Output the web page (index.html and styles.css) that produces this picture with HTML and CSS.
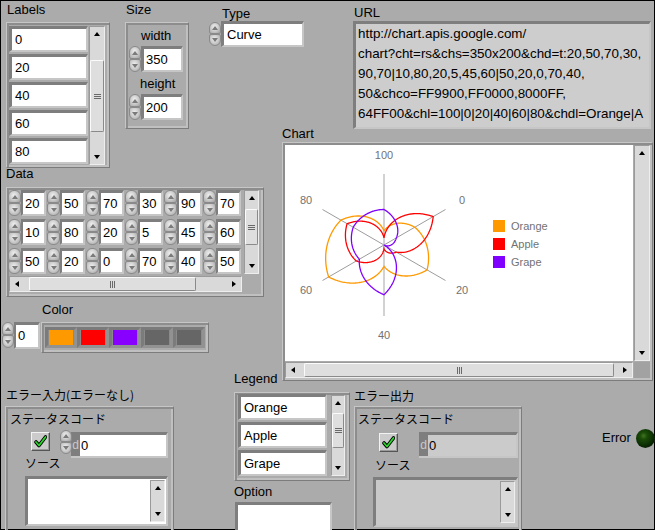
FILE: index.html
```html
<!DOCTYPE html>
<html lang="ja">
<head>
<meta charset="utf-8">
<title>Google Chart Radar</title>
<link rel="stylesheet" href="styles.css">
</head>
<body>
<div class="panel">

  <!-- Labels array -->
  <div class="lbl l-labels">Labels</div>
  <div class="frame arr-labels">
    <div class="stack">
      <div class="box el-lab">0</div>
      <div class="box el-lab">20</div>
      <div class="box el-lab">40</div>
      <div class="box el-lab">60</div>
      <div class="box el-lab">80</div>
    </div>
    <div class="vsb vsb-labels">
      <span class="ar ar-up"></span>
      <div class="trk"><div class="thumb th-labels"><span class="grip-h"></span></div></div>
      <span class="ar ar-dn"></span>
    </div>
  </div>

  <!-- Size cluster -->
  <div class="lbl l-size">Size</div>
  <div class="frame cl-size">
    <div class="lbl-in w-lbl">width</div>
    <div class="num num-size"><div class="spin"><i></i><i></i></div><div class="box nb-size">350</div></div>
    <div class="lbl-in h-lbl">height</div>
    <div class="num num-size"><div class="spin"><i></i><i></i></div><div class="box nb-size">200</div></div>
  </div>

  <!-- Type ring -->
  <div class="lbl l-type">Type</div>
  <div class="num ring-type"><div class="spin spin-type"><i></i><i></i></div><div class="box nb-type">Curve</div></div>

  <!-- URL -->
  <div class="lbl l-url">URL</div>
  <div class="sunk url-box"><div class="url-line">http://chart.apis.google.com/</div><div class="url-line">chart?cht=rs&amp;chs=350x200&amp;chd=t:20,50,70,30,</div><div class="url-line">90,70|10,80,20,5,45,60|50,20,0,70,40,</div><div class="url-line">50&amp;chco=FF9900,FF0000,8000FF,</div><div class="url-line">64FF00&amp;chl=100|0|20|40|60|80&amp;chdl=Orange|A</div><div class="url-line url-last">pple|Grape</div></div>

  <!-- Chart -->
  <div class="lbl l-chart">Chart</div>
  <div class="frame chart">
    <div class="chart-img">
      <svg class="chart-svg" width="348" height="216" viewBox="0 0 348 216">
        <line x1="99" y1="29" x2="99" y2="171" stroke="#d2d2d2" stroke-width="2"/>
        <line x1="37.5" y1="64.5" x2="160.5" y2="135.5" stroke="#9c9c9c" stroke-width="1"/>
        <line x1="37.5" y1="135.5" x2="160.5" y2="64.5" stroke="#9c9c9c" stroke-width="1"/>
        <path data-series="o" fill="none" stroke="#ff9900" stroke-width="1.3"/>
        <path data-series="r" fill="none" stroke="#ff0000" stroke-width="1.3"/>
        <path data-series="p" fill="none" stroke="#8000ff" stroke-width="1.3"/>
        <g class="axis-txt" text-anchor="middle">
          <text x="99" y="14">100</text>
          <text x="177" y="59">0</text>
          <text x="177" y="149">20</text>
          <text x="99" y="194">40</text>
          <text x="21" y="149">60</text>
          <text x="21" y="59">80</text>
        </g>
        <rect x="208" y="75" width="12" height="12" fill="#ff9900"/>
        <rect x="208" y="93" width="12" height="12" fill="#ff0000"/>
        <rect x="208" y="111" width="12" height="12" fill="#8000ff"/>
        <g class="axis-txt">
          <text x="226" y="85">Orange</text>
          <text x="226" y="103">Apple</text>
          <text x="226" y="121">Grape</text>
        </g>
      </svg>
    </div>
    <div class="vsb vsb-chart">
      <span class="ar ar-up"></span>
      <div class="trk"></div>
      <span class="ar ar-dn"></span>
    </div>
    <div class="hsb hsb-chart">
      <span class="ar ar-l"></span>
      <div class="trk"><div class="thumb th-chart"><span class="grip-v"></span></div></div>
      <span class="ar ar-r"></span>
    </div>
    <div class="corner"></div>
  </div>

  <!-- Data array -->
  <div class="lbl l-data">Data</div>
  <div class="frame arr-data">
    <div class="data-top">
      <div class="data-grid">
        <div class="num"><div class="spin"><i></i><i></i></div><div class="box nb-data">20</div></div>
        <div class="num"><div class="spin"><i></i><i></i></div><div class="box nb-data">50</div></div>
        <div class="num"><div class="spin"><i></i><i></i></div><div class="box nb-data">70</div></div>
        <div class="num"><div class="spin"><i></i><i></i></div><div class="box nb-data">30</div></div>
        <div class="num"><div class="spin"><i></i><i></i></div><div class="box nb-data">90</div></div>
        <div class="num"><div class="spin"><i></i><i></i></div><div class="box nb-data">70</div></div>
        <div class="num"><div class="spin"><i></i><i></i></div><div class="box nb-data">10</div></div>
        <div class="num"><div class="spin"><i></i><i></i></div><div class="box nb-data">80</div></div>
        <div class="num"><div class="spin"><i></i><i></i></div><div class="box nb-data">20</div></div>
        <div class="num"><div class="spin"><i></i><i></i></div><div class="box nb-data">5</div></div>
        <div class="num"><div class="spin"><i></i><i></i></div><div class="box nb-data">45</div></div>
        <div class="num"><div class="spin"><i></i><i></i></div><div class="box nb-data">60</div></div>
        <div class="num"><div class="spin"><i></i><i></i></div><div class="box nb-data">50</div></div>
        <div class="num"><div class="spin"><i></i><i></i></div><div class="box nb-data">20</div></div>
        <div class="num"><div class="spin"><i></i><i></i></div><div class="box nb-data">0</div></div>
        <div class="num"><div class="spin"><i></i><i></i></div><div class="box nb-data">70</div></div>
        <div class="num"><div class="spin"><i></i><i></i></div><div class="box nb-data">40</div></div>
        <div class="num"><div class="spin"><i></i><i></i></div><div class="box nb-data">50</div></div>
      </div>
      <div class="vsb vsb-data">
        <span class="ar ar-up"></span>
        <div class="trk"><div class="thumb th-data-v"><span class="grip-h"></span></div></div>
        <span class="ar ar-dn"></span>
      </div>
    </div>
    <div class="hsb hsb-data">
      <span class="ar ar-l"></span>
      <div class="trk"><div class="thumb th-data-h"><span class="grip-v"></span></div></div>
      <span class="ar ar-r"></span>
    </div>
  </div>

  <!-- Color -->
  <div class="lbl l-color">Color</div>
  <div class="num idx-color"><div class="spin"><i></i><i></i></div><div class="box nb-idx">0</div></div>
  <div class="frame arr-color">
    <span class="sw"><i class="sw-o"></i></span>
    <span class="sw"><i class="sw-r"></i></span>
    <span class="sw"><i class="sw-p"></i></span>
    <span class="sw"><i class="sw-g"></i></span>
    <span class="sw"><i class="sw-g"></i></span>
  </div>

  <!-- Error in -->
  <div class="lbl jp l-errin">エラー入力(エラーなし)</div>
  <div class="frame cl-err cl-errin">
    <div class="lbl-in jp">ステータスコード</div>
    <div class="err-row">
      <div class="chk"><svg width="13" height="13" viewBox="0 0 13 13"><path d="M2 7 L5 10.5 L11.5 2" fill="none" stroke="#000" stroke-width="3.6" stroke-linejoin="round" stroke-linecap="round"/><path d="M2 7 L5 10.5 L11.5 2" fill="none" stroke="#2bd62b" stroke-width="1.8" stroke-linejoin="round" stroke-linecap="round"/></svg></div>
      <div class="spin spin-err"><i></i><i></i></div>
      <div class="rnum rnum-in"><span class="radix">d</span><span class="rfield">0</span></div>
    </div>
    <div class="lbl-in jp src-in">ソース</div>
    <div class="sunk src src-inbox">
      <div class="src-txt"></div>
      <div class="vsb vsb-src"><span class="ar ar-up"></span><div class="trk"></div><span class="ar ar-dn"></span></div>
    </div>
  </div>

  <!-- Legend -->
  <div class="lbl l-legend">Legend</div>
  <div class="frame arr-legend">
    <div class="stack">
      <div class="box el-leg">Orange</div>
      <div class="box el-leg">Apple</div>
      <div class="box el-leg">Grape</div>
    </div>
    <div class="vsb vsb-legend">
      <span class="ar ar-up"></span>
      <div class="trk"><div class="thumb th-legend"><span class="grip-h"></span></div></div>
      <span class="ar ar-dn"></span>
    </div>
  </div>

  <!-- Option -->
  <div class="lbl l-option">Option</div>
  <div class="box opt-box"></div>

  <!-- Error out -->
  <div class="lbl jp l-errout">エラー出力</div>
  <div class="frame cl-err cl-errout">
    <div class="lbl-in jp">ステータスコード</div>
    <div class="err-row">
      <div class="chk chk-out"><svg width="13" height="13" viewBox="0 0 13 13"><path d="M2 7 L5 10.5 L11.5 2" fill="none" stroke="#000" stroke-width="3.6" stroke-linejoin="round" stroke-linecap="round"/><path d="M2 7 L5 10.5 L11.5 2" fill="none" stroke="#2bd62b" stroke-width="1.8" stroke-linejoin="round" stroke-linecap="round"/></svg></div>
      <div class="rnum rnum-out"><span class="radix">d</span><span class="rfield ind">0</span></div>
    </div>
    <div class="lbl-in jp src-out">ソース</div>
    <div class="sunk src src-outbox">
      <div class="src-txt"></div>
      <div class="vsb vsb-src"><span class="ar ar-up"></span><div class="trk"></div><span class="ar ar-dn"></span></div>
    </div>
  </div>

  <!-- Error LED -->
  <div class="lbl l-error">Error</div>
  <div class="led"></div>

</div>
<script src="script.js"></script>
</body>
</html>
```

FILE: styles.css
```css
* { box-sizing: border-box; margin: 0; padding: 0; }
html, body { width: 655px; height: 530px; overflow: hidden; }
body {
  background: #ababab;
  font-family: "Liberation Sans", "Noto Sans CJK JP", sans-serif;
  font-size: 13px;
  color: #000;
}
.panel {
  position: relative;
  width: 655px;
  height: 530px;
  background: #ababab;
  overflow: hidden;
  outline: 1px solid #000;
  outline-offset: -1px;
}

/* labels on the free canvas */
.lbl { position: absolute; line-height: 15px; white-space: nowrap; }
.lbl-in { line-height: 15px; white-space: nowrap; }
.jp { font-size: 12px; font-family: "Noto Sans CJK JP", "Liberation Sans", sans-serif; }

.l-labels { left: 7px; top: 2px; }
.l-size { left: 126px; top: 2px; }
.l-type { left: 222px; top: 6px; }
.l-url { left: 354px; top: 5px; }
.l-chart { left: 282px; top: 126px; }
.l-data { left: 6px; top: 166px; }
.l-color { left: 42px; top: 302px; }
.l-errin { left: 6px; top: 387px; }
.l-legend { left: 234px; top: 371px; }
.l-option { left: 234px; top: 484px; }
.l-errout { left: 354px; top: 388px; }
.l-error { left: 602px; top: 430px; }

/* raised frames of arrays and clusters */
.frame {
  position: absolute;
  border: 1px solid;
  border-color: #c6c6c6 #7c7c7c #7c7c7c #c6c6c6;
  box-shadow: inset 2px 2px 0 #8d8d8d, inset -2px -2px 0 #c0c0c0;
}

/* sunken white text boxes */
.box {
  background: #fff;
  border-style: solid;
  border-width: 3px 2px 2px 3px;
  border-color: #7e7e7e #c6c6c6 #c6c6c6 #7e7e7e;
  white-space: nowrap;
  overflow: hidden;
  padding-left: 3px;
  line-height: 21px;
  height: 26px;
}
.sunk {
  border-style: solid;
  border-width: 3px 2px 2px 3px;
  border-color: #7e7e7e #c6c6c6 #c6c6c6 #7e7e7e;
}

/* spinners (increment / decrement) */
.num { display: flex; align-items: flex-start; }
.spin {
  width: 12px;
  height: 26px;
  flex: none;
  display: flex;
  flex-direction: column;
}
.spin i {
  flex: 1;
  position: relative;
  border: 1px solid #8a8a8a;
  background: radial-gradient(ellipse at 45% 40%, #f0f0f0 0, #cfcfcf 45%, #9e9e9e 100%);
}
.spin i:first-child { border-radius: 6px 6px 2px 2px; }
.spin i:last-child { border-radius: 2px 2px 6px 6px; }
.spin i::after {
  content: "";
  position: absolute;
  left: 50%;
  top: 50%;
  margin-left: -3px;
  margin-top: -2px;
  border-left: 3px solid transparent;
  border-right: 3px solid transparent;
}
.spin i:first-child::after { border-bottom: 4px solid #7a7a7a; }
.spin i:last-child::after { border-top: 4px solid #7a7a7a; }
.spin-type { height: 24px; margin-top: 1px; }

/* scrollbars */
.vsb {
  width: 16px;
  display: flex;
  flex-direction: column;
  background: #d9d9d9;
  border: 1px solid;
  border-color: #9a9a9a #eeeeee #eeeeee #9a9a9a;
  flex: none;
}
.hsb {
  height: 16px;
  display: flex;
  background: #d9d9d9;
  border: 1px solid;
  border-color: #9a9a9a #eeeeee #eeeeee #9a9a9a;
  flex: none;
}
.ar { flex: none; display: flex; align-items: center; justify-content: center; }
.vsb .ar { height: 14px; }
.hsb .ar { width: 14px; }
.ar::before { content: ""; display: block; }
.ar-up::before { border-left: 3.5px solid transparent; border-right: 3.5px solid transparent; border-bottom: 4px solid #000; }
.ar-dn::before { border-left: 3.5px solid transparent; border-right: 3.5px solid transparent; border-top: 4px solid #000; }
.ar-l::before { border-top: 3.5px solid transparent; border-bottom: 3.5px solid transparent; border-right: 4px solid #000; }
.ar-r::before { border-top: 3.5px solid transparent; border-bottom: 3.5px solid transparent; border-left: 4px solid #000; }
.trk { flex: 1; min-width: 0; min-height: 0; display: flex; }
.vsb .trk { flex-direction: column; }
.thumb {
  background: #dedede;
  border: 1px solid;
  border-color: #fbfbfb #8a8a8a #8a8a8a #fbfbfb;
  border-radius: 2px;
  display: flex;
  align-items: center;
  justify-content: center;
  flex: none;
}
.grip-h {
  width: 7px; height: 5px;
  border-top: 1px solid #6a6a6a; border-bottom: 1px solid #6a6a6a;
  background: linear-gradient(#6a6a6a, #6a6a6a) center / 100% 1px no-repeat;
}
.grip-v {
  width: 5px; height: 7px;
  border-left: 1px solid #6a6a6a; border-right: 1px solid #6a6a6a;
  background: linear-gradient(#6a6a6a, #6a6a6a) center / 1px 100% no-repeat;
}

/* Labels array */
.arr-labels {
  left: 6px; top: 22px; width: 104px; height: 146px;
  display: flex; gap: 1px;
  padding: 3px 4px 2px 2px;
}
.stack { display: flex; flex-direction: column; gap: 2px; }
.el-lab { width: 79px; }
.vsb-labels { width: 16px; }
.th-labels { margin-top: 19px; height: 72px; }

/* Size cluster */
.cl-size {
  left: 125px; top: 22px; width: 64px; height: 107px;
  display: flex; flex-direction: column; align-items: flex-start;
  padding: 5px 0 0 3px;
}
.w-lbl { margin-left: 12px; }
.h-lbl { margin-left: 11px; margin-top: 4px; }
.num-size { margin-top: 3px; }
.nb-size { width: 42px; padding-left: 2px; }

/* Type ring */
.ring-type { position: absolute; left: 209px; top: 21px; }
.nb-type { width: 83px; }

/* URL */
.url-box {
  position: absolute; left: 353px; top: 21px; width: 298px; height: 108px;
  background: #cdcdcd;
  padding: 0 0 0 2px;
  font-size: 13.4px;
  line-height: 20px;
  overflow: hidden;
}
.url-line { white-space: nowrap; height: 20px; }
.url-last { height: 4px; overflow: hidden; }

/* Chart */
.chart {
  left: 282px; top: 142px; width: 371px; height: 239px;
  display: grid;
  grid-template-columns: 348px 16px;
  grid-template-rows: 216px 16px;
  gap: 1px;
  padding: 2px;
}
.chart-img { background: #fff; overflow: hidden; }
.chart-svg { display: block; }
.axis-txt { font-family: "Liberation Sans", Arial, sans-serif; font-size: 11px; fill: #727272; }
.th-chart { margin-left: 4px; width: 310px; }
.corner { background: #a2a2a2; }

/* Data array */
.arr-data {
  left: 6px; top: 187px; width: 258px; height: 110px;
  display: flex; flex-direction: column;
  padding: 2px 4px 0 1px;
}
.data-top { display: flex; gap: 3px; height: 84px; }
.data-grid {
  display: grid;
  grid-template-columns: repeat(6, 38px);
  grid-auto-rows: 26px;
  column-gap: 1px;
  row-gap: 3px;
}
.data-grid .spin { width: 13px; }
.nb-data { width: 25px; border-width: 3px 2px 2px 2px; padding-left: 2px; }
.vsb-data { width: 15px; }
.th-data-v { margin-top: 4px; height: 36px; }
.hsb-data { margin: 2px 0 0 1px; width: 233px; }
.th-data-h { margin-left: 5px; width: 167px; }

/* Color */
.idx-color { position: absolute; left: 2px; top: 322px; }
.nb-idx { width: 26px; height: 27px; border-width: 3px 2px 2px 2px; line-height: 22px; padding-left: 2px; }
.arr-color {
  left: 41px; top: 322px; width: 168px; height: 31px;
  display: flex;
  padding: 4px 0 0 3px;
}
.sw {
  display: block;
  border: 3px solid;
  border-color: #7b7b7b #929292 #929292 #7b7b7b;
  background: #8a8a8a;
  padding: 0 1px;
  width: 32px; height: 21px;
}
.sw i { display: block; width: 24px; height: 15px; }
.sw-o { background: #ff9900; }
.sw-r { background: #ff0000; }
.sw-p { background: #8800ff; }
.sw-g { background: #666666; }

/* Error clusters */
.cl-err {
  top: 406px; height: 130px;
  display: flex; flex-direction: column; align-items: flex-start;
}
.cl-errin { left: 5px; width: 169px; padding: 4px 0 0 4px; }
.cl-errout { left: 354px; width: 168px; padding: 4px 0 0 3px; }
.err-row { display: flex; align-items: flex-start; margin-top: 4px; }
.chk {
  width: 19px; height: 19px;
  margin: 2px 0 0 21px;
  background: #cbcbcb;
  border: 1px solid;
  border-color: #f2f2f2 #555 #555 #f2f2f2;
  box-shadow: inset -1px -1px 0 #9a9a9a;
  display: flex; align-items: center; justify-content: center;
}
.chk-out { margin-top: 3px; }
.spin-err { height: 24px; margin-left: 10px; }
.rnum {
  display: flex;
  height: 26px;
  border-style: solid;
  border-width: 3px 2px 2px 0;
  border-color: #7e7e7e #c6c6c6 #c6c6c6 #7e7e7e;
  margin-top: 2px;
}
.rnum-in { width: 97px; margin-left: -1px; }
.rnum-out { width: 99px; margin-left: 21px; }
.radix {
  width: 9px; flex: none;
  background: #7e7e7e; color: #c9c9c9;
  font-size: 12px; line-height: 21px; text-align: right; padding-right: 1px;
}
.rfield { flex: 1; background: #fff; line-height: 21px; padding-left: 1px; }
.rfield.ind { background: #cbcbcb; }
.src-in { margin: -3px 0 0 15px; }
.src-out { margin: -1px 0 0 17px; }
.src { display: flex; }
.src-inbox { margin: 6px 0 0 15px; width: 143px; height: 50px; background: #fff; }
.src-outbox { margin: 5px 0 0 15px; width: 145px; height: 50px; background: #c9c9c9; }
.src-txt { flex: 1; }
.vsb-src { width: 15px; margin: 1px 1px 2px 0; }

/* Legend */
.arr-legend {
  left: 234px; top: 392px; width: 116px; height: 89px;
  display: flex; gap: 4px;
  padding: 1px 4px 4px 3px;
}
.el-leg { width: 89px; }
.vsb-legend { width: 14px; margin-top: 1px; }
.th-legend { margin-top: 3px; height: 35px; }

/* Option */
.opt-box { position: absolute; left: 235px; top: 502px; width: 97px; height: 32px; }

/* LED */
.led {
  position: absolute; left: 636px; top: 429px;
  width: 19px; height: 19px; border-radius: 50%;
  background: radial-gradient(circle at 40% 36%, #3f7420 0, #1a4a07 22%, #0d3204 52%, #072002 70%, #6e6e6e 80%, #d6d6d6 92%, #bdbdbd 100%);
}
```

FILE: script.js
```js
(function () {
  var data = {
    o: [20, 50, 70, 30, 90, 70],
    r: [10, 80, 20, 5, 45, 60],
    p: [50, 20, 0, 70, 40, 50]
  };
  var cx = 99, cy = 100, R = 71;
  function build(v) {
    var d = '';
    for (var s = 0; s <= 360; s++) {
      var k = Math.floor(s / 60) % 6;
      var f = (s % 60) / 60;
      var a = v[k], b = v[(k + 1) % 6];
      if (s === 360) { a = v[0]; b = v[0]; f = 0; }
      var r = (a + (b - a) * f) / 100 * R;
      var t = s * Math.PI / 180;
      var x = cx + r * Math.sin(t);
      var y = cy - r * Math.cos(t);
      d += (s ? 'L' : 'M') + x.toFixed(2) + ' ' + y.toFixed(2);
    }
    return d + 'Z';
  }
  var paths = document.querySelectorAll('[data-series]');
  for (var i = 0; i < paths.length; i++) {
    paths[i].setAttribute('d', build(data[paths[i].getAttribute('data-series')]));
  }
})();
```
